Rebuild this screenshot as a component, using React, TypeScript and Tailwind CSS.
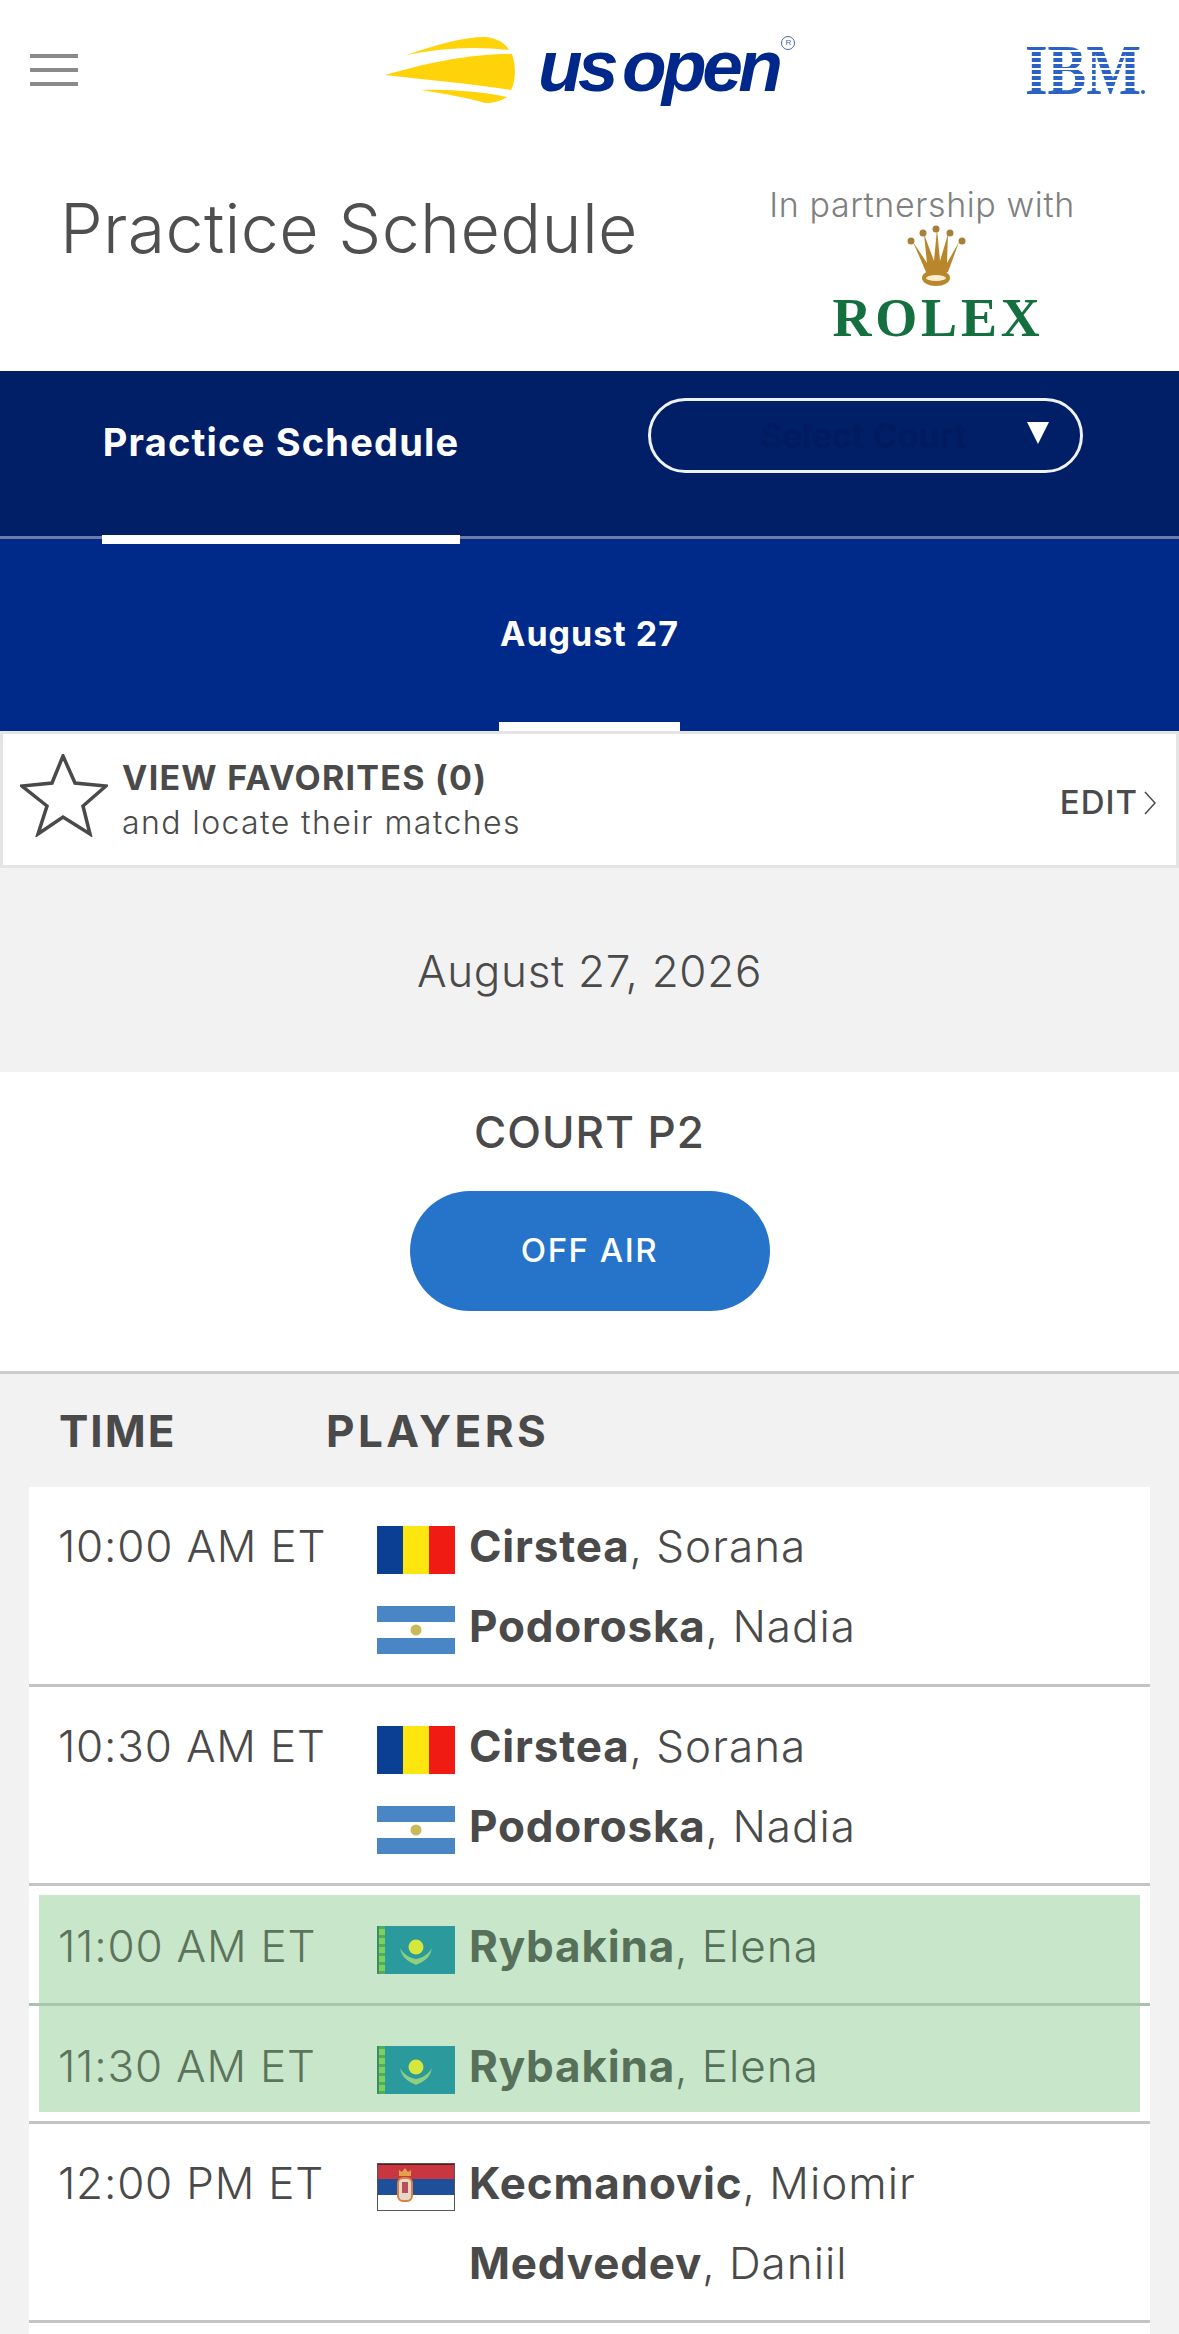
const FONT = "font-['Inter','Noto_Sans',sans-serif]";

interface Row {
  time: string;
  players: { last: string; first: string; flag?: 'ro' | 'ar' | 'kz' | 'rs' }[];
}

function Flag({ code }: { code?: string }) {
  if (!code) return <div className="w-[78px] h-[48px] shrink-0" />;
  return (
    <svg width="78" height="48" viewBox="0 0 78 48" className="shrink-0 mt-[8px]">
      {code === 'ro' && (
        <>
          <rect width="26" height="48" fill="#0b3f94" />
          <rect x="26" width="26" height="48" fill="#fde60f" />
          <rect x="52" width="26" height="48" fill="#f01c14" />
        </>
      )}
      {code === 'ar' && (
        <>
          <rect width="78" height="48" fill="#4a86c5" />
          <rect y="16" width="78" height="16" fill="#ffffff" />
          <circle cx="39" cy="24" r="5.5" fill="#c9b95a" />
        </>
      )}
      {code === 'kz' && (
        <>
          <rect width="78" height="48" fill="#2a9a9c" />
          <rect width="2" height="48" fill="#3f8a6a" />
          <rect x="2" width="6" height="48" fill="#7fd05a" />
          <path d="M5 0 V48" stroke="#4fae62" strokeWidth="6" strokeDasharray="3 6" />
          <circle cx="39" cy="21" r="7.5" fill="#d5e63c" />
          <path d="M23 22 C25 33 33 36 39 39 C45 36 53 33 55 22 C51 29 45 32 39 33 C33 32 27 29 23 22 Z" fill="#8fd080" />
        </>
      )}
      {code === 'rs' && (
        <>
          <rect width="78" height="16" fill="#c8363f" />
          <rect y="16" width="78" height="16" fill="#1f4f99" />
          <rect y="32" width="78" height="16" fill="#ffffff" />
          <rect width="78" height="2" fill="#5a1a1a" />
          <rect x="0.5" y="0.5" width="77" height="47" fill="none" stroke="#555" />
          <rect x="21" y="15" width="14" height="23" rx="5" fill="#e6d6cc" stroke="#d9803a" strokeWidth="2" />
          <rect x="25" y="19" width="6" height="11" fill="#b8505a" />
          <path d="M22 13 L22 7 L25 9 L28 5 L31 9 L34 7 L34 13 Z" fill="#e2a14a" />
        </>
      )}
    </svg>
  );
}

function ScheduleRow({ row, green, className = '' }: { row: Row; green?: boolean; className?: string }) {
  return (
    <div className={`flex ${green ? 'items-center h-full' : 'pt-[32px] pb-[30px]'} ${className}`}>
      <div className={`${green ? 'w-[338px] pl-[19px]' : 'w-[348px] pl-[29px]'} text-[44px] leading-[54px] font-light tracking-[0.8px] whitespace-nowrap ${green ? 'text-[#5c745c]' : 'text-[#4a4a4a]'}`}>
        {row.time}
      </div>
      <div className={`flex flex-col gap-[26px] ${green ? 'text-[#56705a]' : 'text-[#4a4a4a]'}`}>
        {row.players.map((p) => (
          <div key={p.last} className="flex items-center gap-[14px] h-[54px]">
            <Flag code={p.flag} />
            <div className="text-[44px] leading-[54px] font-light tracking-[1px] whitespace-nowrap">
              <span className="font-bold tracking-[0.8px]">{p.last}</span>, {p.first}
            </div>
          </div>
        ))}
      </div>
    </div>
  );
}

const FIRST: Row[] = [
  {
    time: '10:00 AM ET',
    players: [
      { last: 'Cirstea', first: 'Sorana', flag: 'ro' },
      { last: 'Podoroska', first: 'Nadia', flag: 'ar' },
    ],
  },
  {
    time: '10:30 AM ET',
    players: [
      { last: 'Cirstea', first: 'Sorana', flag: 'ro' },
      { last: 'Podoroska', first: 'Nadia', flag: 'ar' },
    ],
  },
];

const GREEN: Row[] = [
  { time: '11:00 AM ET', players: [{ last: 'Rybakina', first: 'Elena', flag: 'kz' }] },
  { time: '11:30 AM ET', players: [{ last: 'Rybakina', first: 'Elena', flag: 'kz' }] },
];

const LAST: Row = {
  time: '12:00 PM ET',
  players: [
    { last: 'Kecmanovic', first: 'Miomir', flag: 'rs' },
    { last: 'Medvedev', first: 'Daniil' },
  ],
};

export default function App() {
  return (
    <div className={`w-[1179px] h-[2334px] overflow-hidden bg-[#f2f2f2] ${FONT}`}>
      {/* top bar */}
      <div className="bg-white h-[371px] flex flex-col">
        <div className="h-[140px] flex items-center pl-[30px] pr-[34px]">
          <div className="flex flex-col gap-[10px] w-[48px]">
            <div className="h-[4px] bg-[#8a8a8a]" />
            <div className="h-[4px] bg-[#8a8a8a]" />
            <div className="h-[4px] bg-[#8a8a8a]" />
          </div>
          <div className="ml-[307px] flex items-center gap-[21px]">
            <svg width="132" height="66" viewBox="0 0 132 66">
              <path d="M22 18 C50 8 78 0 100 0 C112 1 120 6 124 13 C90 9 55 11 22 18 Z" fill="#ffd30a" />
              <path d="M0 38 C40 26 90 16 127 17 C131 28 131 44 126 53 C90 47 40 43 0 38 Z" fill="#ffd30a" />
              <path d="M36 53 C65 52 100 55 122 60 C116 64 108 66 100 66 C85 61 60 57 36 53 Z" fill="#ffd30a" />
            </svg>
            <div className="relative -mt-[8px] font-['Liberation_Sans',sans-serif] font-bold italic text-[#00288a] text-[73px] leading-[76px] tracking-[-4.5px] [word-spacing:-8px] pr-[4px]">
              us open
              <span className="absolute right-[-13px] top-[8px] w-[14px] h-[14px] rounded-full border border-[#4a66a8] text-[8px] leading-[12px] not-italic font-normal tracking-normal text-center text-[#4a66a8]">
                R
              </span>
            </div>
          </div>
          <svg width="120" height="50" viewBox="0 0 120 50" className="ml-auto">
            <text x="0" y="49" fontFamily="Liberation Serif" fontWeight="700" fontSize="72" textLength="116" lengthAdjust="spacingAndGlyphs" fill="#2a63c4">
              IBM
            </text>
            {[5, 11, 17, 23, 29, 35, 41].map((y) => (
              <rect key={y} x="0" y={y} width="120" height="2" fill="#ffffff" />
            ))}
            <circle cx="118" cy="47" r="2" fill="#2a63c4" />
          </svg>
        </div>
        <div className="flex pl-[60px] pr-[105px] justify-between">
          <h1 className="pt-[48px] text-[68px] leading-[80px] font-light tracking-[0.35px] text-[#4f4f4f]">Practice Schedule</h1>
          <div className="flex flex-col items-center w-[304px] pt-[46px]">
            <div className="text-[34px] leading-[38px] font-light tracking-[0.6px] text-[#808080] whitespace-nowrap">In partnership with</div>
            <svg width="62" height="62" viewBox="0 0 62 62" className="ml-[32px] mt-[1px]">
              <path d="M6 17 L19 47 C25 50 35 50 41 47 L52 17 L40 38 L41 9 L33 36 L30 4 L27 36 L17 9 L20 38 Z" fill="#b9862b" />
              <circle cx="4" cy="16" r="3.5" fill="#a87f3a" />
              <circle cx="16" cy="8" r="3.5" fill="#a87f3a" />
              <circle cx="29" cy="4" r="3.5" fill="#a87f3a" />
              <circle cx="43" cy="8" r="3.5" fill="#a87f3a" />
              <circle cx="55" cy="16" r="3.5" fill="#a87f3a" />
              <ellipse cx="29" cy="53" rx="14" ry="8" fill="#b9862b" />
              <ellipse cx="29" cy="53" rx="10" ry="3" fill="#fbeed0" />
            </svg>
            <div className="ml-[32px] mt-[8px] font-['Liberation_Serif',serif] font-bold text-[#14703f] text-[54px] leading-[46px] tracking-[3.8px]">ROLEX</div>
          </div>
        </div>
      </div>

      {/* dark nav */}
      <div className="relative z-10 h-[168px] bg-[#011f66] border-b-[3px] border-[#6d7ba6] flex pl-[102px]">
        <div className="w-[358px] pt-[48px] text-center text-[38px] leading-[46px] font-bold tracking-[1.2px] text-white whitespace-nowrap">Practice Schedule</div>
        <div className="ml-[188px] mt-[27px] w-[435px] h-[75px] rounded-[38px] border-[3px] border-[#eef2fb] flex items-center pl-[109px] pr-[31px]">
          <div className="text-[34px] font-bold text-[#011b60] whitespace-nowrap">Select Court</div>
          <div className="ml-auto -mt-[6px] w-0 h-0 border-l-[11px] border-r-[11px] border-t-[22px] border-l-transparent border-r-transparent border-t-white" />
        </div>
        <div className="absolute left-[102px] bottom-[-8px] w-[358px] h-[9px] bg-white" />
      </div>

      {/* date tab */}
      <div className="relative h-[192px] bg-[#002a8a] flex items-center justify-center">
        <div className="text-[34px] font-bold tracking-[1px] text-white -mt-[3px]">August 27</div>
        <div className="absolute left-[499px] bottom-0 w-[181px] h-[9px] bg-white" />
      </div>

      {/* favorites */}
      <div className="h-[137px] bg-white border-[3px] border-[#e4e4e4] flex items-center justify-between pl-[17px] pr-[20px]">
        <div className="flex items-center gap-[14px]">
          <svg width="88" height="83" viewBox="0 0 88 83" className="-mt-[8px]">
            <path d="M43 2 L55 29 L86 32 L63 52 L70 80 L43 63 L18 80 L27 52 L2 32 L32 29 Z" fill="none" stroke="#4a4a4a" strokeWidth="3.5" />
          </svg>
          <div className="mt-[1px]">
            <div className="text-[34px] leading-[46px] font-bold text-[#4a4a4a] tracking-[1.25px] whitespace-nowrap">VIEW FAVORITES (0)</div>
            <div className="text-[32px] leading-[44px] font-light text-[#4a4a4a] tracking-[1.4px] whitespace-nowrap">and locate their matches</div>
          </div>
        </div>
        <div className="flex items-center gap-[6px] mt-[6px] text-[33px] font-medium tracking-[1px] text-[#4a4a4a]">
          EDIT
          <svg width="12" height="24" viewBox="0 0 12 24">
            <path d="M1 1 L11 12 L1 23" fill="none" stroke="#4a4a4a" strokeWidth="1.5" />
          </svg>
        </div>
      </div>

      {/* date heading */}
      <div className="h-[204px] pt-[2px] flex items-center justify-center text-[44px] font-light tracking-[0.7px] text-[#4a4a4a]">August 27, 2026</div>

      {/* court */}
      <div className="h-[302px] bg-white border-b-[3px] border-[#cccccc] flex flex-col items-center pt-[32px]">
        <div className="text-[44px] leading-[56px] font-medium tracking-[1px] text-[#4a4a4a]">COURT P2</div>
        <div className="mt-[31px] w-[360px] h-[120px] rounded-[60px] bg-[#2574c9] flex items-center justify-center text-[33px] tracking-[1.5px] text-white font-medium">OFF AIR</div>
      </div>

      {/* table */}
      <div className="px-[29px]">
        <div className="h-[113px] pt-[1px] flex items-center pl-[30px] text-[44px] font-bold text-[#4a4a4a]">
          <div className="w-[267px] tracking-[2px]">TIME</div>
          <div className="tracking-[3.4px]">PLAYERS</div>
        </div>
        <div className="bg-white">
          {FIRST.map((r, i) => (
            <div key={r.time} className={`border-b-[3px] border-[#c4c4c4] ${i === 0 ? 'pb-[1px]' : ''}`}>
              <ScheduleRow row={r} />
            </div>
          ))}
          <div className="pt-[9px] px-[10px]">
            <div className="h-[108px] bg-[#c8e6c9]">
              <ScheduleRow row={GREEN[0]} green className="pb-[6px]" />
            </div>
          </div>
          <div className="h-[3px] bg-[#a9c4aa]" />
          <div className="pb-[9px] px-[10px] border-b-[3px] border-[#c4c4c4]">
            <div className="h-[106px] bg-[#c8e6c9]">
              <ScheduleRow row={GREEN[1]} green className="pt-[14px]" />
            </div>
          </div>
          <div className="border-b-[3px] border-[#c4c4c4]">
            <ScheduleRow row={LAST} />
          </div>
          <div className="h-[40px]" />
        </div>
      </div>
    </div>
  );
}
